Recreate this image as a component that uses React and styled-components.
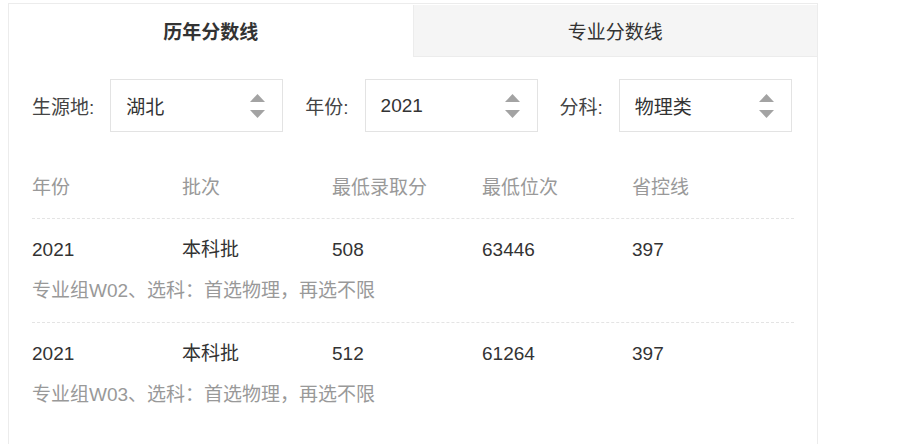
import React from "react";
import styled, { createGlobalStyle } from "styled-components";

const GlobalStyle = createGlobalStyle`
  body {
    margin: 0;
    background: #fff;
    font-family: "Liberation Sans", "Noto Sans CJK SC", sans-serif;
  }
`;

const Page = styled.div`
  padding: 3px 0 0 8px;
`;

const Panel = styled.div`
  width: 808px;
  min-height: 460px;
  border: 1px solid #ececec;
  border-bottom: none;
  background: #fff;
`;

const Tabs = styled.div`
  display: flex;
  height: 53px;
`;

const Tab = styled.div`
  flex: 1;
  display: flex;
  align-items: center;
  justify-content: center;
  font-size: 19px;
  color: #333;
  font-weight: ${(p) => (p.active ? "bold" : "normal")};
  background: ${(p) => (p.active ? "#fff" : "#f5f5f5")};
  border-left: ${(p) => (p.active ? "none" : "1px solid #ececec")};
  border-bottom: ${(p) => (p.active ? "none" : "1px solid #ececec")};
  margin-top: ${(p) => (p.active ? "0" : "1px")};
`;

const Body = styled.div`
  padding: 0 23px 0 23px;
`;

const Filters = styled.div`
  display: flex;
  align-items: center;
  margin-top: 22px;
  height: 53px;
`;

const Label = styled.span`
  flex-shrink: 0;
  font-size: 19px;
  color: #444;
  margin-right: 16px;
  white-space: nowrap;
`;

const SelectBox = styled.div`
  flex-shrink: 0;
  width: 173px;
  height: 53px;
  box-sizing: border-box;
  border: 1px solid #e3e3e3;
  display: flex;
  align-items: center;
  justify-content: space-between;
  padding: 0 17px 0 15px;
  margin-right: 22px;
  font-size: 19px;
  color: #333;

  &:last-child {
    margin-right: 0;
  }
`;

const Table = styled.div`
  margin-top: 44px;
`;

const Row = styled.div`
  padding: ${(p) => (p.header ? "0 0 18px" : "19px 0")};
  border-bottom: ${(p) => (p.last ? "none" : "1px dashed #e4e4e4")};
`;

const Cells = styled.div`
  display: grid;
  grid-template-columns: repeat(5, 150px);
  line-height: 24px;
  font-size: 19px;
  color: ${(p) => (p.header ? "#999" : "#333")};
`;

const Note = styled.div`
  margin-top: 17px;
  line-height: 24px;
  font-size: 19px;
  color: #999;
`;

const Arrows = () => (
  <svg width="15" height="24" viewBox="0 0 15 24">
    <polygon points="7.5,0 15,8 0,8" fill="#a3a3a3" />
    <polygon points="0,16 15,16 7.5,24" fill="#a3a3a3" />
  </svg>
);

const Select = ({ value }) => (
  <SelectBox>
    <span>{value}</span>
    <Arrows />
  </SelectBox>
);

const rows = [
  { year: "2021", batch: "本科批", score: "508", rank: "63446", line: "397", note: "专业组W02、选科：首选物理，再选不限" },
  { year: "2021", batch: "本科批", score: "512", rank: "61264", line: "397", note: "专业组W03、选科：首选物理，再选不限" },
];

export default function App() {
  return (
    <Page>
      <GlobalStyle />
      <Panel>
        <Tabs>
          <Tab active>历年分数线</Tab>
          <Tab>专业分数线</Tab>
        </Tabs>
        <Body>
          <Filters>
            <Label>生源地:</Label>
            <Select value="湖北" />
            <Label>年份:</Label>
            <Select value="2021" />
            <Label>分科:</Label>
            <Select value="物理类" />
          </Filters>
          <Table>
            <Row header>
              <Cells header>
                <span>年份</span>
                <span>批次</span>
                <span>最低录取分</span>
                <span>最低位次</span>
                <span>省控线</span>
              </Cells>
            </Row>
            {rows.map((r, i) => (
              <Row key={i} last={i === rows.length - 1}>
                <Cells>
                  <span>{r.year}</span>
                  <span>{r.batch}</span>
                  <span>{r.score}</span>
                  <span>{r.rank}</span>
                  <span>{r.line}</span>
                </Cells>
                <Note>{r.note}</Note>
              </Row>
            ))}
          </Table>
        </Body>
      </Panel>
    </Page>
  );
}
